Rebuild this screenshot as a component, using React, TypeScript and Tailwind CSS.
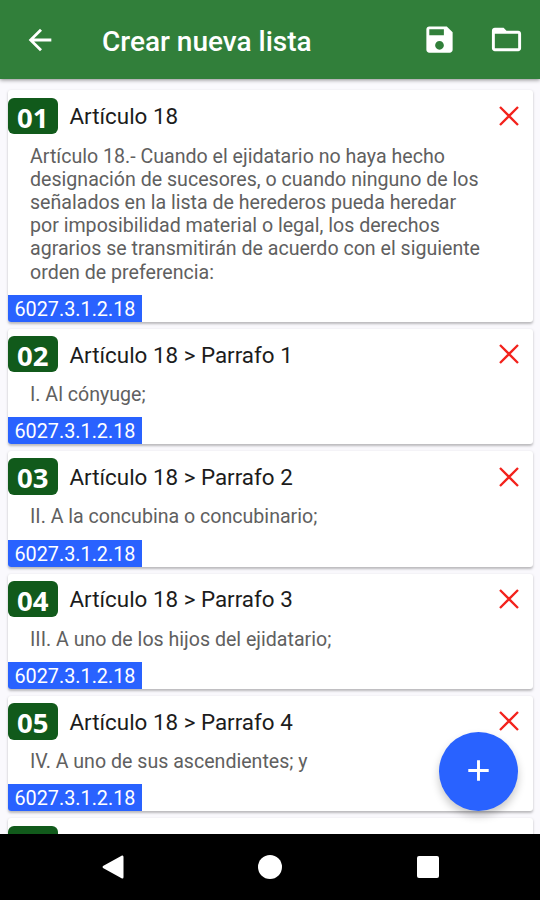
type Item = {
  title: string
  body: string
  code: string
}

const CODE = '6027.3.1.2.18'

const ITEMS: Item[] = [
  {
    title: 'Artículo 18',
    body: 'Artículo 18.- Cuando el ejidatario no haya hecho designación de sucesores, o cuando ninguno de los señalados en la lista de herederos pueda heredar por imposibilidad material o legal, los derechos agrarios se transmitirán de acuerdo con el siguiente orden de preferencia:',
    code: CODE,
  },
  { title: 'Artículo 18 > Parrafo 1', body: 'I. Al cónyuge;', code: CODE },
  { title: 'Artículo 18 > Parrafo 2', body: 'II. A la concubina o concubinario;', code: CODE },
  { title: 'Artículo 18 > Parrafo 3', body: 'III. A uno de los hijos del ejidatario;', code: CODE },
  { title: 'Artículo 18 > Parrafo 4', body: 'IV. A uno de sus ascendientes; y', code: CODE },
]

export default function App() {
  return (
    <div className="relative flex h-[900px] w-[540px] flex-col overflow-hidden bg-[#faf9fd] font-['Roboto',sans-serif]">
      <TopBar />
      <main className="flex min-h-0 flex-1 flex-col gap-[6.8px] overflow-hidden pt-[11.4px] pr-[7px] pl-[7.5px]">
        {ITEMS.map((item, i) => (
          <Card key={i} item={item} index={i + 1} />
        ))}
        <NextCard />
      </main>
      <NavBar />
      <button
        type="button"
        aria-label="Agregar"
        className="absolute top-[731.5px] left-[439px] flex size-[79px] items-center justify-center rounded-full bg-[#2962ff] text-white shadow-[0_5px_8px_rgba(0,0,0,0.22)]"
      >
        <svg width="35" height="35" viewBox="0 0 24 24" fill="currentColor" className="-mt-px">
          <path d="M19 13h-6v6h-2v-6H5v-2h6V5h2v6h6v2z" />
        </svg>
      </button>
    </div>
  )
}

function TopBar() {
  return (
    <header className="z-10 flex h-[79px] shrink-0 items-center bg-[#317f3a] pt-[4px] pr-[17px] pl-[23px] text-white shadow-[0_1px_4px_rgba(0,0,0,0.45)]">
      <svg width="34" height="34" viewBox="0 0 24 24" fill="currentColor" className="-mt-[4px]">
        <path d="M20 11H7.83l5.59-5.59L12 4l-8 8 8 8 1.41-1.41L7.83 13H20v-2z" />
      </svg>
      <h1 className="ml-[45px] flex-1 text-[28px] leading-[32px] font-medium whitespace-nowrap">Crear nueva lista</h1>
      <svg width="35" height="35" viewBox="0 0 24 24" fill="currentColor" className="-mt-[4px] -ml-px">
        <path d="M17 3H5c-1.11 0-2 .9-2 2v14c0 1.1.89 2 2 2h14c1.1 0 2-.9 2-2V7l-4-4zm-5 16c-1.66 0-3-1.34-3-3s1.34-3 3-3 3 1.34 3 3-1.34 3-3 3zm3-10H5V5h10v4z" />
      </svg>
      <svg width="35" height="35" viewBox="0 0 24 24" fill="currentColor" className="-mt-[4px] -mr-[1px] ml-[32.5px]">
        <path d="M20 6h-8l-2-2H4c-1.1 0-1.99.9-1.99 2L2 18c0 1.1.9 2 2 2h16c1.1 0 2-.9 2-2V8c0-1.1-.9-2-2-2zm0 12H4V8h16v10z" />
      </svg>
    </header>
  )
}

function Card({ item, index }: { item: Item; index: number }) {
  return (
    <section className="shrink-0 overflow-hidden rounded-[3px] bg-white shadow-[0_1.5px_2.5px_rgba(0,0,0,0.26)]">
      <div className="flex items-center pt-[7.3px] pr-[14px]">
        <span className="flex h-[36.3px] w-[50.5px] items-center justify-center rounded-[6px] bg-[#115a1b] pt-[3px] font-['Noto_Sans',sans-serif] text-[27.5px] leading-none font-bold text-white">
          {String(index).padStart(2, '0')}
        </span>
        <h2 className="ml-[11.5px] flex-1 pt-px text-[22.4px] leading-[26px] text-[#1c1c1c]">{item.title}</h2>
        <svg width="20" height="20" viewBox="0 0 20 20" fill="none" stroke="#f3221c" strokeWidth="2.3">
          <path d="M1 1l18 18M19 1L1 19" />
        </svg>
      </div>
      <p className="mt-[10.7px] w-[482px] pl-[22.5px] text-[19.6px] leading-[23.2px] text-[#606060]">{item.body}</p>
      <div className="mt-[11.1px] flex">
        <span className="h-[27px] w-[134.5px] bg-[#2962ff] pl-[7px] text-[19.8px] leading-[29px] whitespace-nowrap text-white">
          {item.code}
        </span>
      </div>
    </section>
  )
}

// top edge of the card that scrolls in from below
function NextCard() {
  return (
    <section className="h-[116px] shrink-0 rounded-[3px] bg-white pt-[7.3px] shadow-[0_1.5px_2.5px_rgba(0,0,0,0.26)]">
      <div className="h-[36.3px] w-[50.5px] rounded-[6px] bg-[#115a1b]" />
    </section>
  )
}

function NavBar() {
  return (
    <nav className="flex h-[66.5px] shrink-0 items-center justify-between bg-black pr-[101.5px] pl-[102px] text-white">
      <svg width="22" height="24" viewBox="0 0 22 24" fill="currentColor">
        <path d="M20 .5Q21.500 0 21.500 2V22Q21.500 24 20 23.500L1 13Q0 12 1 11z" />
      </svg>
      <span className="size-[24px] rounded-full bg-white" />
      <span className="size-[22px] rounded-[2px] bg-white" />
    </nav>
  )
}
